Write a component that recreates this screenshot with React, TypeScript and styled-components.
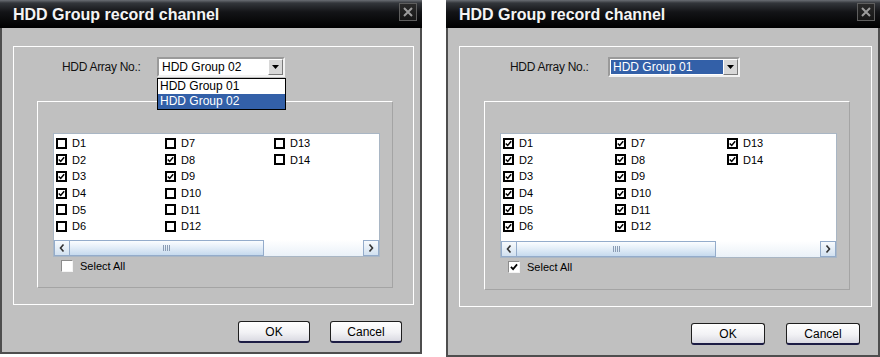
import styled, { createGlobalStyle, ThemeProvider } from 'styled-components';

interface Scale {
	sx: number;
	sy: number;
}
type Themed = { theme: Scale };

/** horizontal / vertical pixel value, scaled per dialog */
const h = (n: number) => ({ theme }: Themed) => `${Math.round(n * theme.sx)}px`;
const v = (n: number) => ({ theme }: Themed) => `${Math.round(n * theme.sy)}px`;

const CHANNELS = Array.from({ length: 14 }, (_, i) => i + 1);

interface IDialogProps {
	group: string;
	open: boolean;
	focused: boolean;
	checked: number[];
	selectAll: boolean;
}

const Tick = ({ size = 7 }: { size?: number }) => (
	<svg width={size} height={size} viewBox="0 0 7 7">
		<path d="M0.8 3.4 L2.7 5.4 L6.2 1.2" fill="none" stroke="#000" strokeWidth="1.5" />
	</svg>
);

const RecordDialog = ({ group, open, focused, checked, selectAll }: IDialogProps) => {
	return (
		<Dialog>
			<TitleBar>
				<Title>HDD Group record channel</Title>
				<CloseBox>
					<svg width="10" height="10" viewBox="0 0 10 10">
						<path d="M1 1 L9 9 M9 1 L1 9" stroke="#9c9c9c" strokeWidth="2" />
					</svg>
				</CloseBox>
			</TitleBar>
			<Body>
				<Frame>
					<FieldRow>
						<Label>HDD Array No.:</Label>
						<Select>
							<SelectValue $focused={focused}>HDD Group {group}</SelectValue>
							<ArrowButton>
								<svg width="7" height="4" viewBox="0 0 7 4">
									<path d="M0 0 H7 L3.5 4 Z" fill="#000" />
								</svg>
							</ArrowButton>
							{open && (
								<Dropdown>
									<Option $active={group === '01'}>HDD Group 01</Option>
									<Option $active={group === '02'}>HDD Group 02</Option>
								</Dropdown>
							)}
						</Select>
					</FieldRow>
					<InnerBox>
						<ListBox>
							<ChannelGrid>
								{CHANNELS.map((ch) => (
									<Channel key={ch}>
										<Box>{checked.includes(ch) && <Tick />}</Box>D{ch}
									</Channel>
								))}
							</ChannelGrid>
							<ScrollBar>
								<ScrollButton>
									<svg width="6" height="8" viewBox="0 0 6 8">
										<path d="M4.5 0.5 L1.5 4 L4.5 7.5" fill="none" stroke="#333" strokeWidth="1.6" />
									</svg>
								</ScrollButton>
								<Thumb>
									<Grip />
									<Grip />
									<Grip />
									<Grip />
								</Thumb>
								<Track />
								<ScrollButton>
									<svg width="6" height="8" viewBox="0 0 6 8">
										<path d="M1.5 0.5 L4.5 4 L1.5 7.5" fill="none" stroke="#333" strokeWidth="1.6" />
									</svg>
								</ScrollButton>
							</ScrollBar>
						</ListBox>
						<SelectAllRow>
							<FlatBox>{selectAll && <Tick size={8} />}</FlatBox>
							Select All
						</SelectAllRow>
					</InnerBox>
				</Frame>
				<ButtonRow>
					<Button>OK</Button>
					<Button>Cancel</Button>
				</ButtonRow>
			</Body>
		</Dialog>
	);
};

const App = () => (
	<>
		<GlobalStyle />
		<Page>
			<ThemeProvider theme={{ sx: 1, sy: 1 }}>
				<RecordDialog group="02" open focused={false} checked={[2, 3, 4, 8, 9]} selectAll={false} />
			</ThemeProvider>
			<ThemeProvider theme={{ sx: 1.028, sy: 1.0085 }}>
				<RecordDialog group="01" open={false} focused checked={CHANNELS} selectAll />
			</ThemeProvider>
		</Page>
	</>
);

export default App;

const GlobalStyle = createGlobalStyle`
	body {
		margin: 0;
		background: #fff;
		font-family: "Liberation Sans", Arial, sans-serif;
	}
`;

const Page = styled.div`
	display: flex;
	gap: 24px;
	align-items: flex-start;
	width: 880px;
	height: 357px;
	overflow: hidden;
`;

const Dialog = styled.div`
	flex-shrink: 0;
	width: ${h(422)};
	height: ${v(354)};
	display: flex;
	flex-direction: column;
`;

const TitleBar = styled.div`
	height: 28px;
	flex-shrink: 0;
	display: flex;
	align-items: flex-start;
	padding-left: ${h(13)};
	background: linear-gradient(to bottom, #6a6e74 0px, #33363b 3px, #131417 12px, #000 100%);
`;

const Title = styled.span`
	font: bold 16px "Liberation Sans", Arial, sans-serif;
	color: #f4f4f4;
	line-height: 29px;
`;

const CloseBox = styled.div`
	margin: 3px ${h(5)} 0 auto;
	width: 18px;
	height: 18px;
	box-sizing: border-box;
	border: 1px solid #5e5e5e;
	background: linear-gradient(#2a2a2a, #161616);
	display: flex;
	align-items: center;
	justify-content: center;
`;

const Body = styled.div`
	flex: 1;
	background: #c0c0c0;
	border: 2px solid #4e4e4e;
	border-top: none;
	padding: ${v(18)} ${h(6)} 0 ${h(11)};
	display: flex;
	flex-direction: column;
`;

const Frame = styled.div`
	border: 1px solid #fff;
	padding: ${v(10)} ${h(20)} ${v(16)} ${h(23)};
	display: flex;
	flex-direction: column;
`;

const FieldRow = styled.div`
	display: flex;
	align-items: center;
	height: ${v(20)};
	padding-left: ${h(25)};
`;

const Label = styled.span`
	width: ${h(95)};
	font-size: 12px;
	letter-spacing: -0.3px;
	color: #111;
`;

const Select = styled.div`
	position: relative;
	width: ${h(128)};
	height: 100%;
	box-sizing: border-box;
	border: 2px solid;
	border-color: #9a9a9a #f2f2f2 #f2f2f2 #9a9a9a;
	background: #fff;
	display: flex;
`;

const SelectValue = styled.div<{ $focused: boolean }>`
	flex: 1;
	margin: 1px 0 1px 1px;
	padding-left: 2px;
	font-size: 12px;
	display: flex;
	align-items: center;
	background: ${(p) => (p.$focused ? '#3360a8' : '#fff')};
	color: ${(p) => (p.$focused ? '#fff' : '#000')};
`;

const ArrowButton = styled.div`
	width: 15px;
	box-sizing: border-box;
	border: 1px solid;
	border-color: #fff #7a7a7a #7a7a7a #fff;
	background: #d8d8d8;
	display: flex;
	align-items: center;
	justify-content: center;
`;

const Dropdown = styled.div`
	position: absolute;
	top: calc(100% + 3px);
	left: -2px;
	right: -3px;
	border: 1px solid #000;
	background: #fff;
	z-index: 2;
`;

const Option = styled.div<{ $active: boolean }>`
	height: 15px;
	line-height: 15px;
	padding-left: 2px;
	font-size: 12px;
	background: ${(p) => (p.$active ? '#3360a8' : '#fff')};
	color: ${(p) => (p.$active ? '#fff' : '#000')};
`;

const InnerBox = styled.div`
	margin-top: ${v(24)};
	height: ${v(187)};
	box-sizing: border-box;
	border: 1px solid;
	border-color: #fff #a4a4a4 #a4a4a4 #fff;
	padding: ${v(31)} ${h(12)} 0 ${h(15)};
	display: flex;
	flex-direction: column;
`;

const ListBox = styled.div`
	height: ${v(124)};
	box-sizing: border-box;
	border: 1px solid #a9b6c4;
	background: #fff;
	display: flex;
	flex-direction: column;
`;

const ChannelGrid = styled.div`
	flex: 1;
	display: grid;
	grid-auto-flow: column;
	grid-template-columns: repeat(3, ${h(109)});
	grid-template-rows: repeat(6, 16.6px);
	padding: 1px 0 0 2px;
`;

const Channel = styled.div`
	display: flex;
	align-items: center;
	gap: 5px;
	font-size: 11px;
	color: #000;
`;

const Box = styled.span`
	width: 11px;
	height: 11px;
	box-sizing: border-box;
	border: 2px solid #000;
	background: #fff;
	display: flex;
	align-items: center;
	justify-content: center;
`;

const ScrollBar = styled.div`
	height: 16px;
	display: flex;
	background: #edf3f9;
`;

const ScrollButton = styled.div`
	width: 16px;
	box-sizing: border-box;
	border: 1px solid #94accb;
	background: linear-gradient(#f7fafd, #d2e1f0);
	display: flex;
	align-items: center;
	justify-content: center;
`;

const Thumb = styled.div`
	width: ${h(194)};
	box-sizing: border-box;
	border: 1px solid #94accb;
	border-left: none;
	background: linear-gradient(#fbfdff, #e4eef8 45%, #c6daee);
	display: flex;
	align-items: center;
	justify-content: center;
	gap: 1px;
`;

const Grip = styled.span`
	width: 1px;
	height: 6px;
	background: #8a9cb4;
`;

const Track = styled.div`
	flex: 1;
	background: linear-gradient(#ffffff, #eaf1f8);
`;

const SelectAllRow = styled.div`
	margin-top: 2px;
	padding-left: ${h(8)};
	display: flex;
	align-items: center;
	gap: 7px;
	height: 14px;
	font-size: 11px;
	color: #000;
`;

const FlatBox = styled.span`
	width: 12px;
	height: 12px;
	box-sizing: border-box;
	border: 1px solid;
	border-color: #8c8c8c #f4f4f4 #f4f4f4 #8c8c8c;
	background: #fff;
	display: flex;
	align-items: center;
	justify-content: center;
`;

const ButtonRow = styled.div`
	display: flex;
	justify-content: flex-end;
	gap: ${h(20)};
	margin-top: ${v(16)};
	padding-right: ${h(12)};
`;

const Button = styled.button`
	width: ${h(72)};
	height: ${v(22)};
	padding: 0;
	border: 1px solid #1e1e1e;
	border-bottom: 2px solid #1c1c44;
	border-radius: 3px;
	background: linear-gradient(#ffffff, #f2f2f5 55%, #dadae2);
	font: 12px "Liberation Sans", Arial, sans-serif;
	color: #000;
`;
